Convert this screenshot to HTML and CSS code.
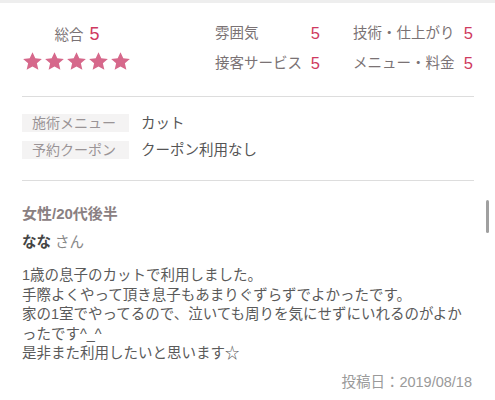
FILE: index.html
```html
<!DOCTYPE html>
<html lang="ja">
<head>
    <meta charset="UTF-8">
    <meta name="viewport" content="width=device-width, initial-scale=1.0">
    <title>口コミ</title>
    <link rel="stylesheet" href="styles.css">
</head>
<body>
    <div class="top-band"></div>

    <div class="review">
        <!-- Ratings -->
        <div class="ratings">
            <div class="overall">
                <div class="overall-head">総合 <span class="num big">5</span></div>
                <div class="stars">
                    <svg viewBox="0 0 24 24"><path d="M12 1.3l3.2 7 7.5.7-5.7 5 1.7 7.5L12 17.6l-6.7 3.9 1.7-7.5-5.7-5 7.5-.7z"/></svg>
                    <svg viewBox="0 0 24 24"><path d="M12 1.3l3.2 7 7.5.7-5.7 5 1.7 7.5L12 17.6l-6.7 3.9 1.7-7.5-5.7-5 7.5-.7z"/></svg>
                    <svg viewBox="0 0 24 24"><path d="M12 1.3l3.2 7 7.5.7-5.7 5 1.7 7.5L12 17.6l-6.7 3.9 1.7-7.5-5.7-5 7.5-.7z"/></svg>
                    <svg viewBox="0 0 24 24"><path d="M12 1.3l3.2 7 7.5.7-5.7 5 1.7 7.5L12 17.6l-6.7 3.9 1.7-7.5-5.7-5 7.5-.7z"/></svg>
                    <svg viewBox="0 0 24 24"><path d="M12 1.3l3.2 7 7.5.7-5.7 5 1.7 7.5L12 17.6l-6.7 3.9 1.7-7.5-5.7-5 7.5-.7z"/></svg>
                </div>
            </div>
            <div class="scores">
                <div class="score"><span>雰囲気</span><span class="num">5</span></div>
                <div class="score"><span>技術・仕上がり</span><span class="num">5</span></div>
                <div class="score"><span>接客サービス</span><span class="num">5</span></div>
                <div class="score"><span>メニュー・料金</span><span class="num">5</span></div>
            </div>
        </div>

        <!-- Menu / coupon -->
        <div class="details">
            <span class="tag">施術メニュー</span><span class="value">カット</span>
            <span class="tag">予約クーポン</span><span class="value">クーポン利用なし</span>
        </div>

        <!-- Comment -->
        <div class="comment">
            <p class="reviewer">女性/20代後半</p>
            <p class="name"><b>なな</b> さん</p>
            <p class="body">1歳の息子のカットで利用しました。<br>手際よくやって頂き息子もあまりぐずらずでよかったです。<br>家の1室でやってるので、泣いても周りを気にせずにいれるのがよかったです^_^<br>是非また利用したいと思います☆</p>
            <p class="date">投稿日：2019/08/18</p>
        </div>
    </div>

    <div class="scrollbar"></div>
</body>
</html>
```

FILE: styles.css
```css
/* Page */
body {
    margin: 0;
    font-family: "Liberation Sans", "Noto Sans CJK JP", sans-serif;
    color: #555555;
    background: #ffffff;
}

.top-band {
    height: 3px;
    background: #eeeeee;
}

.review {
    padding: 0 21px 0 22px;
}

/* Ratings block */
.ratings {
    display: flex;
    align-items: flex-start;
    padding: 20px 0 22px;
    border-bottom: 1px solid #dddddd;
}

.overall {
    width: 110px;
    text-align: center;
}

.overall-head {
    font-size: 14.5px;
    line-height: 22px;
    color: #7a7274;
}

.num {
    color: #cf3a60;
    font-size: 16.5px;
}

.num.big {
    font-size: 18px;
    margin-left: 2px;
}

.stars {
    display: flex;
    gap: 1px;
    margin-top: 5px;
}

.stars svg {
    width: 21px;
    height: 21px;
    fill: #d6688b;
}

.scores {
    display: grid;
    grid-template-columns: 105px 120px;
    column-gap: 33px;
    row-gap: 8px;
    margin: -1px 1px 0 auto;
}

.score {
    display: flex;
    justify-content: space-between;
    font-size: 14.5px;
    line-height: 22px;
    color: #7a7274;
}

/* Menu and coupon rows */
.details {
    display: grid;
    grid-template-columns: 107px 1fr;
    column-gap: 12px;
    row-gap: 9px;
    padding: 17px 0 21px;
    border-bottom: 1px solid #dddddd;
}

.tag {
    background: #f4f3f3;
    color: #9a9496;
    font-size: 14px;
    line-height: 18px;
    padding-left: 10px;
}

.value {
    font-size: 14.5px;
    line-height: 18px;
    color: #555555;
}

/* Comment */
.comment p {
    margin: 0;
}

.reviewer {
    margin-top: 23px !important;
    font-size: 15px;
    font-weight: bold;
    line-height: 20px;
    color: #8a8082;
}

.name {
    margin-top: 8px !important;
    font-size: 14.5px;
    line-height: 20px;
    color: #888888;
}

.name b {
    color: #444444;
}

.body {
    margin-top: 14px !important;
    font-size: 14.5px;
    line-height: 19.5px;
    color: #5a5a5a;
}

.date {
    margin-top: 8px !important;
    text-align: right;
    font-size: 14.5px;
    line-height: 20px;
    color: #9a9a9a;
    padding-right: 2px;
}

/* Scroll indicator over the page */
.scrollbar {
    position: fixed;
    top: 200px;
    right: 6px;
    width: 3px;
    height: 33px;
    border-radius: 2px;
    background: #a0a0a0;
}
```
